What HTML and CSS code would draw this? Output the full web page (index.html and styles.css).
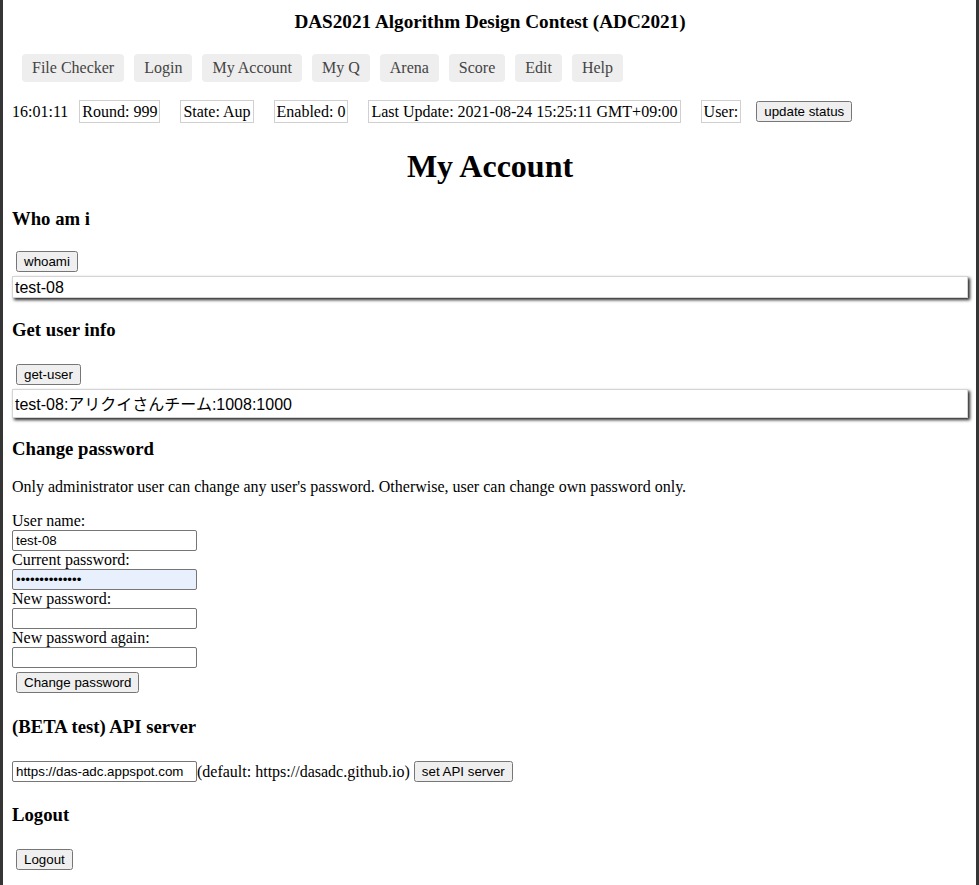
FILE: index.html
```html
<!DOCTYPE html>
<html lang="en">
<head>
<meta charset="utf-8">
<title>DAS2021 My Account</title>
<link rel="stylesheet" href="styles.css">
</head>
<body>
<div class="frame">
  <div class="title">DAS2021 Algorithm Design Contest (ADC2021)</div>
  <nav class="nav">
    <a class="nav-item" href="#">File Checker</a>
    <a class="nav-item" href="#">Login</a>
    <a class="nav-item" href="#">My Account</a>
    <a class="nav-item" href="#">My Q</a>
    <a class="nav-item" href="#">Arena</a>
    <a class="nav-item" href="#">Score</a>
    <a class="nav-item" href="#">Edit</a>
    <a class="nav-item" href="#">Help</a>
  </nav>
  <div class="status">
    <span class="clock">16:01:11</span>
    <span class="stat">Round: 999</span>
    <span class="stat">State: Aup</span>
    <span class="stat">Enabled: 0</span>
    <span class="stat">Last Update: 2021-08-24 15:25:11 GMT+09:00</span>
    <span class="stat stat-user">User:</span>
    <button class="btn btn-status" type="button">update status</button>
  </div>

  <h1 class="page-title">My Account</h1>

  <section class="sec sec-who">
    <h3 class="sec-title">Who am i</h3>
    <div class="row"><button class="btn" type="button">whoami</button></div>
    <div class="result">test-08</div>
  </section>

  <section class="sec sec-user">
    <h3 class="sec-title">Get user info</h3>
    <div class="row"><button class="btn" type="button">get-user</button></div>
    <div class="result result-tall">test-08:アリクイさんチーム:1008:1000</div>
  </section>

  <section class="sec sec-pass">
    <h3 class="sec-title sec-title-tight">Change password</h3>
    <p class="note">Only administrator user can change any user's password. Otherwise, user can change own password only.</p>
    <form class="pw-form" onsubmit="return false">
      <label class="lbl" for="u">User name:</label>
      <input class="field" id="u" type="text" value="test-08">
      <label class="lbl" for="p0">Current password:</label>
      <input class="field field-auto" id="p0" type="password" value="abcdefghijklmn">
      <label class="lbl" for="p1">New password:</label>
      <input class="field" id="p1" type="password">
      <label class="lbl" for="p2">New password again:</label>
      <input class="field" id="p2" type="password">
      <div class="row row-submit"><button class="btn" type="button">Change password</button></div>
    </form>
  </section>

  <section class="sec sec-api">
    <h3 class="sec-title">(BETA test) API server</h3>
    <div class="row api-row">
      <input class="field" type="text" value="https://das-adc.appspot.com"><span class="api-note">(default: https://dasadc.github.io)</span><button class="btn" type="button">set API server</button>
    </div>
  </section>

  <section class="sec sec-logout">
    <h3 class="sec-title">Logout</h3>
    <div class="row"><button class="btn" type="button">Logout</button></div>
  </section>
</div>
</body>
</html>
```

FILE: styles.css
```css
html, body {
  margin: 0;
  padding: 0;
  background: #fff;
}

body {
  font-family: "Liberation Serif", "Times New Roman", serif;
  font-size: 16px;
  color: #000;
}

.frame {
  min-height: 100vh;
  box-sizing: border-box;
  border-left: 3px solid #353535;
  border-right: 3px solid #353535;
  padding: 0 8px 20px 9px;
  overflow: hidden;
}

.title {
  margin-top: 11px;
  text-align: center;
  font-weight: bold;
  font-size: 19.2px;
  line-height: 22px;
}

.nav {
  display: flex;
  gap: 10px;
  margin-top: 21px;
  padding-left: 10px;
}

.nav-item {
  display: block;
  background: #eeeeee;
  color: #444;
  text-decoration: none;
  line-height: 18px;
  padding: 5px 10px;
  border-radius: 4px;
}

.status {
  display: flex;
  align-items: center;
  margin-top: 18px;
  line-height: 19px;
}

.clock {
  margin-right: 11px;
}

.stat {
  border: 1px solid #d0d0d0;
  padding: 1px 2px;
  margin-right: 20px;
  white-space: pre;
}

.stat-user {
  margin-right: 15px;
}

.btn {
  font-family: "Liberation Sans", Arial, sans-serif;
  font-size: 13.333px;
  margin: 0 0 0 4px;
}

.btn-status {
  margin-left: 0;
}

.page-title {
  margin: 25px 0 0;
  text-align: center;
  font-size: 32px;
  line-height: 37px;
  font-weight: bold;
}

.sec-title {
  margin: 0 0 24px;
  font-size: 18.72px;
  line-height: 21px;
  font-weight: bold;
}

.sec-who { margin-top: 23px; }
.sec-who .sec-title { margin-bottom: 22px; }
.sec-user { margin-top: 21px; }
.sec-pass { margin-top: 20px; }
.sec-api { margin-top: 23px; }
.sec-logout { margin-top: 22px; }

.sec-title-tight {
  margin-bottom: 0;
}

.row {
  display: flex;
  align-items: center;
}

.result {
  margin-top: 4px;
  border: 1px solid #d4d4d4;
  padding: 2px 2px 0;
  font-family: "Liberation Sans", Arial, "Noto Sans CJK JP", sans-serif;
  font-size: 16px;
  line-height: 18px;
  box-shadow: 2px 2px 3px rgba(0, 0, 0, 0.85);
}

.result-tall {
  min-height: 25px;
  display: flex;
  align-items: center;
}

.note {
  margin: 19px 0 0;
  line-height: 18px;
}

.pw-form {
  display: flex;
  flex-direction: column;
  align-items: flex-start;
  margin-top: 16px;
}

.lbl {
  line-height: 18px;
}

.field {
  width: 185px;
  box-sizing: border-box;
  height: 21px;
  margin: 0;
  font-family: "Liberation Sans", Arial, sans-serif;
  font-size: 13.333px;
  padding: 1px 3px;
  border: 1px solid #767676;
  border-radius: 2px;
  background-color: #fff;
  color: #000;
}

.field-auto {
  background-color: #e8f0fe;
}

.row-submit {
  margin-top: 4px;
}

.api-note {
  white-space: pre;
}
```
